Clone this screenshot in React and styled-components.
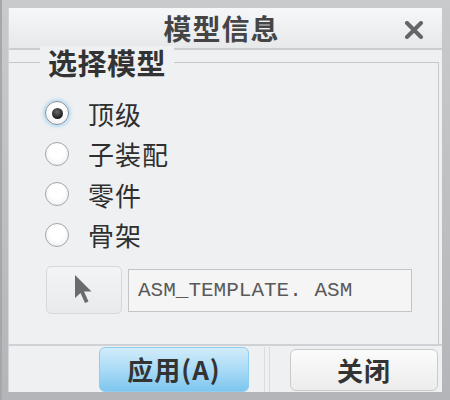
import React, { useState } from "react";
import styled, { createGlobalStyle } from "styled-components";

const GlobalStyle = createGlobalStyle`
  html, body {
    margin: 0;
    padding: 0;
    background: #b8babd;
  }
  * { box-sizing: border-box; }
`;

const CJK = `"Noto Sans CJK SC", "Noto Sans", sans-serif`;

const Frame = styled.div`
  width: 450px;
  height: 400px;
  padding: 8px;
  background: linear-gradient(#c9cacc, #b3b5b8);
  border-left: 2px solid #a5a7aa;
  display: flex;
`;
const Dialog = styled.div`
  flex: 1;
  display: flex;
  flex-direction: column;
  background: #eef0f2;
  border-left: 1px solid #d2d4d7;
  margin-left: -2px;
`;
const TitleBar = styled.div`
  height: 42px;
  flex: none;
  display: flex;
  align-items: center;
  justify-content: center;
  background: linear-gradient(#f6f7f9, #e7e8ea);
  border-bottom: 2px solid #cbcdd0;
  padding-right: 12px;
  font-family: ${CJK};
  font-weight: 700;
  font-size: 28px;
  color: #454545;
  letter-spacing: 1px;
`;
const TitleText = styled.span`
  flex: 1;
  text-align: center;
  padding-left: 30px;
  margin-top: -1px;
`;
const CloseX = styled.svg`
  width: 20px;
  height: 18px;
  margin-right: 6px;
  margin-top: 3px;
`;
const Group = styled.div`
  flex: 1;
  margin-top: 12px;
  margin-right: 3px;
  border-top: 1px solid #c7c9cc;
  border-right: 1px solid #c7c9cc;
  display: flex;
  flex-direction: column;
  background: #eef0f2;
`;
const Legend = styled.div`
  align-self: flex-start;
  margin: -17px 0 0 31px;
  padding: 0 8px;
  height: 32px;
  line-height: 32px;
  background: #eef0f2;
  font-family: ${CJK};
  font-weight: 700;
  font-size: 29px;
  letter-spacing: 0.5px;
  color: #333;
`;
const Options = styled.div`
  display: flex;
  flex-direction: column;
  padding: 15px 0 0 36px;
`;
const OptionRow = styled.label`
  height: 40.5px;
  display: flex;
  align-items: center;
  gap: 19px;
  cursor: pointer;
  font-family: ${CJK};
  font-size: 26px;
  color: #2f2f2f;
  letter-spacing: 1px;
`;
const Radio = styled.span`
  width: 24px;
  height: 24px;
  border-radius: 50%;
  border: 1.5px solid ${(p) => (p.$on ? "#8a8f95" : "#a3a5a8")};
  background: radial-gradient(circle at 50% 40%, #ffffff 40%, #e9eaec 100%);
  box-shadow: ${(p) => (p.$on ? "0 0 3px 2px #b9dcf3" : "none")};
  display: flex;
  align-items: center;
  justify-content: center;
  &::after {
    content: "";
    width: 11px;
    height: 11px;
    border-radius: 50%;
    background: radial-gradient(circle at 45% 35%, #6a6a6a, #1d1d1d 70%);
    display: ${(p) => (p.$on ? "block" : "none")};
  }
`;
const PickRow = styled.div`
  display: flex;
  align-items: center;
  gap: 6px;
  margin: 11px 0 0 37px;
`;
const PickButton = styled.button`
  width: 76px;
  height: 48px;
  border: 1px solid #d6d8db;
  border-radius: 5px;
  background: linear-gradient(#f3f4f6, #e9eaec);
  display: flex;
  align-items: center;
  justify-content: center;
  padding: 0;
`;
const Field = styled.div`
  width: 284px;
  height: 43px;
  border: 1.5px solid #c3c4c6;
  background: #f5f5f6;
  display: flex;
  align-items: center;
  padding-left: 9px;
  font-family: "Liberation Mono", monospace;
  font-size: 21px;
  color: #5a5a5a;
  white-space: pre;
`;
const Footer = styled.div`
  height: 48px;
  flex: none;
  display: flex;
  align-items: stretch;
  border-top: 2px solid #cfd1d4;
  padding: 1px 3px 0 90px;
`;
const ActionButton = styled.button`
  width: ${(p) => (p.$primary ? "150px" : "148px")};
  margin: ${(p) => (p.$primary ? "0" : "2px 0 1px")};
  border: 1px solid ${(p) => (p.$primary ? "#8fcdef" : "#c9cacc")};
  border-radius: 6px;
  background: ${(p) =>
    p.$primary
      ? "linear-gradient(#d2ecfa, #a9dbf6 50%, #7ec6ef)"
      : "linear-gradient(#fbfbfb, #ececec)"};
  font-family: ${CJK};
  font-weight: 700;
  font-size: 26px;
  color: #333;
  letter-spacing: 1px;
  padding: 0 0 2px;
  cursor: pointer;
`;
const Separator = styled.div`
  width: 6px;
  margin: 0 20px 0 15px;
  border-left: 1px solid #d9dbde;
  border-right: 1px solid #d9dbde;
`;

const options = ["顶级", "子装配", "零件", "骨架"];

export default function App() {
  const [selected, setSelected] = useState(0);
  return (
    <>
      <GlobalStyle />
      <Frame>
        <Dialog>
          <TitleBar>
            <TitleText>模型信息</TitleText>
            <CloseX viewBox="0 0 20 18">
              <path d="M3 2 L17 16 M17 2 L3 16" stroke="#666" strokeWidth="4" strokeLinecap="round" />
            </CloseX>
          </TitleBar>
          <Group>
            <Legend>选择模型</Legend>
            <Options>
              {options.map((o, i) => (
                <OptionRow key={o} onClick={() => setSelected(i)}>
                  <Radio $on={selected === i} />
                  {o}
                </OptionRow>
              ))}
            </Options>
            <PickRow>
              <PickButton>
                <svg width="22" height="32" viewBox="0 0 22 32">
                  <path
                    d="M2 1 L2 24 L7.5 19 L12 29 L15.5 27.5 L11 17.5 L18.5 17.5 Z"
                    fill="#6b6b6b"
                  />
                </svg>
              </PickButton>
              <Field>ASM_TEMPLATE. ASM</Field>
            </PickRow>
          </Group>
          <Footer>
            <ActionButton $primary>应用(A)</ActionButton>
            <Separator />
            <ActionButton>关闭</ActionButton>
          </Footer>
        </Dialog>
      </Frame>
    </>
  );
}
